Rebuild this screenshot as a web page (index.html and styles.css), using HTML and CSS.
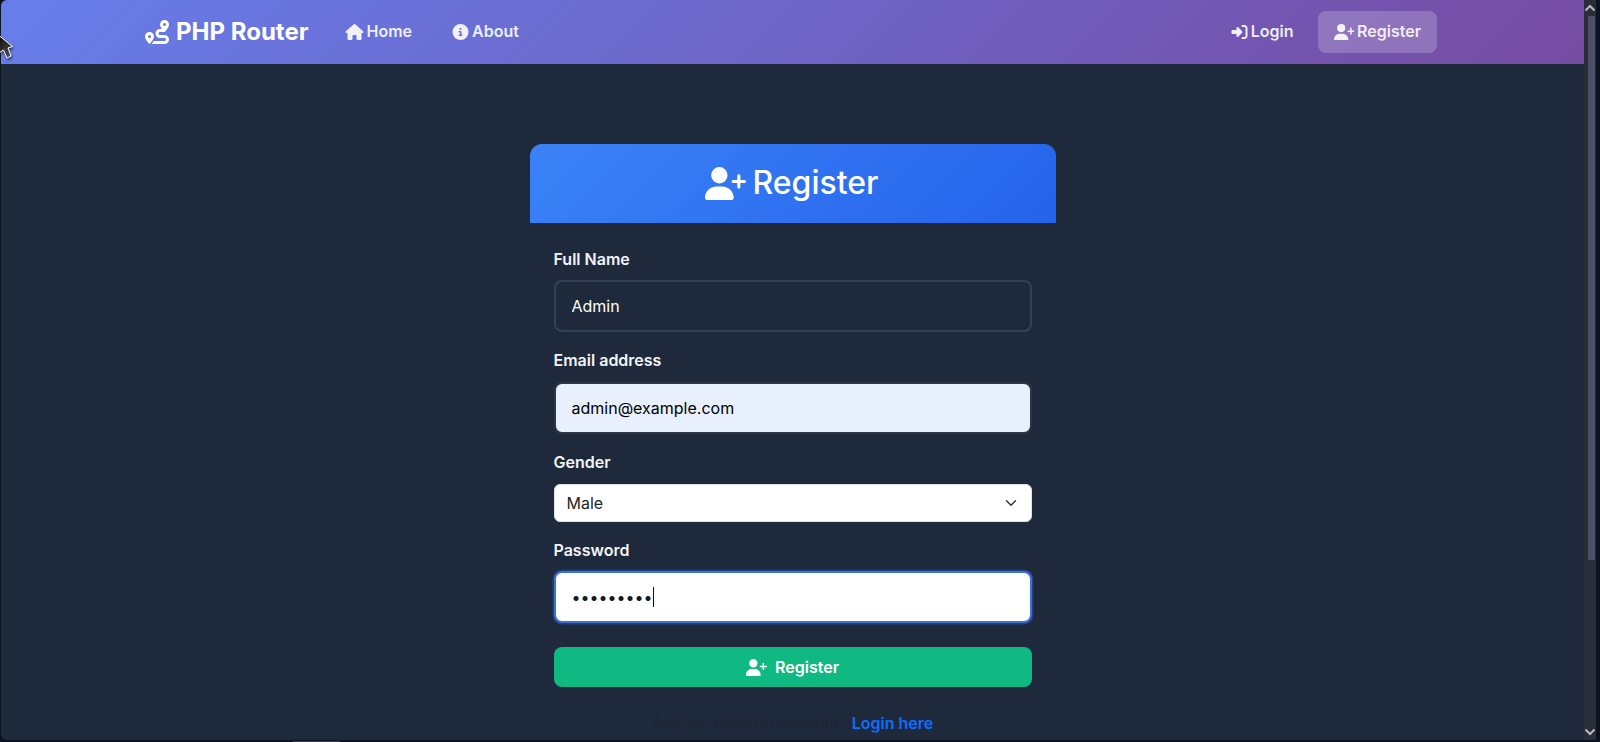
FILE: index.html
```html
<!DOCTYPE html>
<html lang="en">
<head>
  <meta charset="UTF-8" />
  <meta name="viewport" content="width=device-width, initial-scale=1.0"/>
  <title>Register - PHP Router</title>
  <link rel="stylesheet" href="styles.css">
</head>
<body>
  <svg class="defs" aria-hidden="true">
    <symbol id="i-user-plus" viewBox="0 0 640 512"><path d="M96 128a128 128 0 1 1 256 0A128 128 0 1 1 96 128zM0 482.3C0 383.8 79.8 304 178.3 304h91.4C368.2 304 448 383.8 448 482.3c0 16.4-13.3 29.7-29.7 29.7H29.7C13.3 512 0 498.7 0 482.3zM504 312V248H440c-13.3 0-24-10.7-24-24s10.7-24 24-24h64V136c0-13.3 10.7-24 24-24s24 10.7 24 24v64h64c13.3 0 24 10.7 24 24s-10.7 24-24 24H552v64c0 13.3-10.7 24-24 24s-24-10.7-24-24z"/></symbol>
    <symbol id="i-house" viewBox="0 0 576 512"><path d="M575.8 255.5c0 18-15 32.1-32 32.1h-32l.7 160.2c0 2.7-.2 5.4-.5 8.1V472c0 22.1-17.9 40-40 40H456c-1.1 0-2.2 0-3.3-.1c-1.4 .1-2.8 .1-4.2 .1H416 392c-22.1 0-40-17.9-40-40V448 384c0-17.7-14.3-32-32-32H256c-17.7 0-32 14.3-32 32v64 24c0 22.1-17.9 40-40 40H160 128.1c-1.5 0-3-.1-4.5-.2c-1.2 .1-2.4 .2-3.6 .2H104c-22.1 0-40-17.9-40-40V360c0-.9 0-1.9 .1-2.8V287.6H32c-18 0-32-14-32-32.1c0-9 3-17 10-24L266.4 8c7-7 15-8 22-8s15 2 21 7L564.8 231.5c8 7 12 15 11 24z"/></symbol>
    <symbol id="i-info" viewBox="0 0 512 512"><path d="M256 512A256 256 0 1 0 256 0a256 256 0 1 0 0 512zM216 336h24V272H216c-13.3 0-24-10.7-24-24s10.7-24 24-24h48c13.3 0 24 10.7 24 24v88h8c13.3 0 24 10.7 24 24s-10.7 24-24 24H216c-13.3 0-24-10.7-24-24s10.7-24 24-24zm40-208a32 32 0 1 1 0 64 32 32 0 1 1 0-64z"/></symbol>
    <symbol id="i-login" viewBox="0 0 512 512"><path d="M217.9 105.9L340.7 228.7c7.2 7.2 11.3 17.1 11.3 27.3s-4.1 20.1-11.3 27.3L217.9 406.1c-6.4 6.4-15 9.9-24 9.9c-18.7 0-33.9-15.2-33.9-33.9l0-62.1L32 320c-17.7 0-32-14.3-32-32l0-64c0-17.7 14.3-32 32-32l128 0 0-62.1c0-18.7 15.2-33.9 33.9-33.9c9 0 17.6 3.6 24 9.9zM352 416l64 0c17.7 0 32-14.3 32-32l0-256c0-17.7-14.3-32-32-32l-64 0c-17.7 0-32-14.3-32-32s14.3-32 32-32l64 0c53 0 96 43 96 96l0 256c0 53-43 96-96 96l-64 0c-17.7 0-32-14.3-32-32s14.3-32 32-32z"/></symbol>
    <symbol id="i-route" viewBox="0 0 512 512"><path d="M512 96c0 50.2-59.1 125.1-84.6 155c-3.8 4.4-9.4 6.1-14.5 5H320c-17.7 0-32 14.3-32 32s14.3 32 32 32h96c53 0 96 43 96 96s-43 96-96 96H139.6c8.7-9.9 19.3-22.6 30-36.8c6.3-8.4 12.8-17.6 19-27.2H416c17.7 0 32-14.3 32-32s-14.3-32-32-32H320c-53 0-96-43-96-96s43-96 96-96h39.8c-21-31.5-39.8-67.7-39.8-96c0-53 43-96 96-96s96 43 96 96zM117.1 489.1c-3.8 4.3-7.2 8.1-10.1 11.3l-1.8 2-.2-.2c-6 4.6-14.6 4-20-1.8C59.8 473 0 402.5 0 352c0-53 43-96 96-96s96 43 96 96c0 30-21.1 67-43.5 97.9c-10.7 14.7-21.7 28-30.8 38.5l-.6 .7zM128 352a32 32 0 1 0 -64 0 32 32 0 1 0 64 0zM416 128a32 32 0 1 0 0-64 32 32 0 1 0 0 64z"/></symbol>
  </svg>

  <div class="window">
    <div class="page">
      <nav class="navbar">
        <div class="nav-inner">
          <a class="brand" href="#"><svg class="icon"><use href="#i-route"/></svg>PHP Router</a>
          <a class="nav-link nav-home" href="#"><svg class="icon icon-house"><use href="#i-house"/></svg>Home</a>
          <a class="nav-link" href="#"><svg class="icon icon-17"><use href="#i-info"/></svg>About</a>
          <div class="nav-right">
            <a class="nav-link" href="#"><svg class="icon icon-17"><use href="#i-login"/></svg>Login</a>
            <a class="nav-link active" href="#"><svg class="icon icon-wide"><use href="#i-user-plus"/></svg>Register</a>
          </div>
        </div>
      </nav>

      <main class="card">
        <div class="card-header">
          <h2><svg class="icon"><use href="#i-user-plus"/></svg>Register</h2>
        </div>
        <form class="card-body">
          <div class="field">
            <label for="name">Full Name</label>
            <input class="input" id="name" type="text" value="Admin">
          </div>
          <div class="field">
            <label for="email">Email address</label>
            <input class="input autofilled" id="email" type="email" value="admin@example.com">
          </div>
          <div class="field">
            <label for="gender">Gender</label>
            <select class="select" id="gender">
              <option>Male</option>
              <option>Female</option>
            </select>
          </div>
          <div class="field">
            <label for="password">Password</label>
            <div class="input-wrap">
              <input class="input focused" id="password" type="password" value="secret123">
              <span class="caret"></span>
            </div>
          </div>
          <button class="btn" type="button"><svg class="icon"><use href="#i-user-plus"/></svg>Register</button>
          <p class="switch">Already have an account? <a href="#">Login here</a></p>
        </form>
      </main>
    </div>

    <div class="scrollbar">
      <svg class="arrow" viewBox="0 0 12 8"><path d="M1.500 6.500 6 2l4.500 4.500"/></svg>
      <div class="track"><div class="thumb"></div></div>
      <svg class="arrow" viewBox="0 0 12 8"><path d="M1.500 1.500 6 6l4.500-4.500"/></svg>
    </div>

    <svg class="pointer" viewBox="0 0 16 28">
      <defs><linearGradient id="pointer-fill" x1="0" y1="0" x2="1" y2="1"><stop offset="0" stop-color="#000"/><stop offset="1" stop-color="#555"/></linearGradient></defs>
      <path d="M-4 1 12.500 14.500 8 16 11 24 7 26 3.500 18-4 23z"/>
    </svg>
    <div class="task-peek"></div>
  </div>
</body>
</html>
```

FILE: styles.css
```css
* { box-sizing: border-box; }
html, body { margin: 0; height: 100%; overflow: hidden; }
body { font-family: Inter, "Liberation Sans", sans-serif; font-size: 16px; line-height: 1.6; background: #0b1220; color: #f3f4f6; }
a { text-decoration: none; }
.defs { display: none; }

.window { position: relative; display: flex; height: 742px; padding: 0 4px 2px 1px; background: #0b1220; overflow: hidden; }
.page { flex: 1; min-width: 0; border-radius: 6px 0 0 6px; background: #1e293b; overflow: hidden; }

.icon { width: 16px; height: 16px; fill: currentColor; flex: none; }
.icon-17 { width: 17px; }
.icon-wide { width: 20.500px; height: 16.400px; }
.icon-house { width: 19px; }

/* navbar */
.navbar { height: 64px; background: linear-gradient(135deg, #667eea 0%, #764ba2 100%); }
.nav-inner { display: flex; align-items: center; height: 100%; padding: 0 147px 0 143px; }
.brand { display: flex; align-items: center; gap: 6px; margin-right: 21px; font-size: 24px; font-weight: 700; color: #fff; }
.brand .icon { width: 26px; height: 24px; }
.nav-link { display: flex; align-items: center; gap: 3px; padding: 8px 16px; border-radius: 8px; font-weight: 600; color: rgba(255, 255, 255, 0.9); }
.nav-link + .nav-link { margin-left: 8px; }
.nav-home { gap: 2px; }
.nav-right { display: flex; align-items: center; margin-left: auto; }
.nav-link.active { background: rgba(255, 255, 255, 0.2); }

/* card */
.card { width: 526px; margin: 80px auto 0; }
.card-header { height: 79px; padding: 20px; border-radius: 12px 12px 0 0; background: linear-gradient(135deg, #3b82f6 0%, #2563eb 100%); }
.card-header h2 { display: flex; align-items: center; justify-content: center; gap: 7px; margin: 0; padding-right: 2px; font-size: 32px; font-weight: 500; line-height: 1.2; color: #fff; }
.card-header .icon { width: 41px; height: 33px; }
.card-body { padding: 24px; }

/* form */
.field { margin-bottom: 16px; }
.field label { display: block; margin-bottom: 7.800px; font-weight: 600; }
.input { display: block; width: 100%; height: 52px; padding: 12px 16px; border: 2px solid #374151; border-radius: 8px; background: #1e293b; font: inherit; line-height: 1.5; color: #fff; }
.input.autofilled { background: #e8f0fe; color: #000; border-color: #2b3648; }
.input.focused { background: #fff; color: #111827; border-color: #3f72d0; box-shadow: 0 0 0 1.500px rgba(37, 99, 235, 0.4); }
.input-wrap { position: relative; }
.caret { position: absolute; left: 99px; top: 16px; width: 1px; height: 20px; background: #111; }
.select { display: block; width: 100%; height: 38px; margin-top: 8.400px; padding: 6px 36px 6px 12px; border: 1px solid #dee2e6; border-radius: 6px; font: inherit; line-height: 1.5; color: #212529; appearance: none; background: #fff url("data:image/svg+xml,%3csvg xmlns='http://www.w3.org/2000/svg' viewBox='0 0 16 16'%3e%3cpath fill='none' stroke='%23343a40' stroke-linecap='round' stroke-linejoin='round' stroke-width='2' d='m2 5 6 6 6-6'/%3e%3c/svg%3e") no-repeat right 12px center / 16px 12px; }

.btn { display: flex; align-items: center; justify-content: center; gap: 8px; width: 100%; height: 40px; margin-top: 24px; padding: 1px 0 0; border: 0; border-radius: 8px; background: #10b981; font: inherit; font-weight: 600; color: #fff; }
.btn .icon { width: 21px; height: 17px; }
.switch { margin: 24px 0 0; text-align: center; color: #1f2533; }
.switch a { font-weight: 600; color: #0d6efd; }

/* window chrome */
.scrollbar { display: flex; flex-direction: column; width: 12px; background: #2a2d38; }
.track { flex: 1; padding: 0 1px 0 4px; }
.thumb { height: 544px; background: #4d4f68; }
.arrow { width: 12px; height: 16px; flex: none; fill: none; stroke: #b9bac4; stroke-width: 2; }
.pointer { position: absolute; left: 0; top: 32px; width: 16px; height: 28px; fill: url(#pointer-fill); stroke: #fff; stroke-width: 1; filter: drop-shadow(1px 2px 1px rgba(0, 0, 0, 0.5)); }
.task-peek { position: absolute; left: 293px; bottom: 0; width: 47px; height: 1px; background: #3a4050; }
```
